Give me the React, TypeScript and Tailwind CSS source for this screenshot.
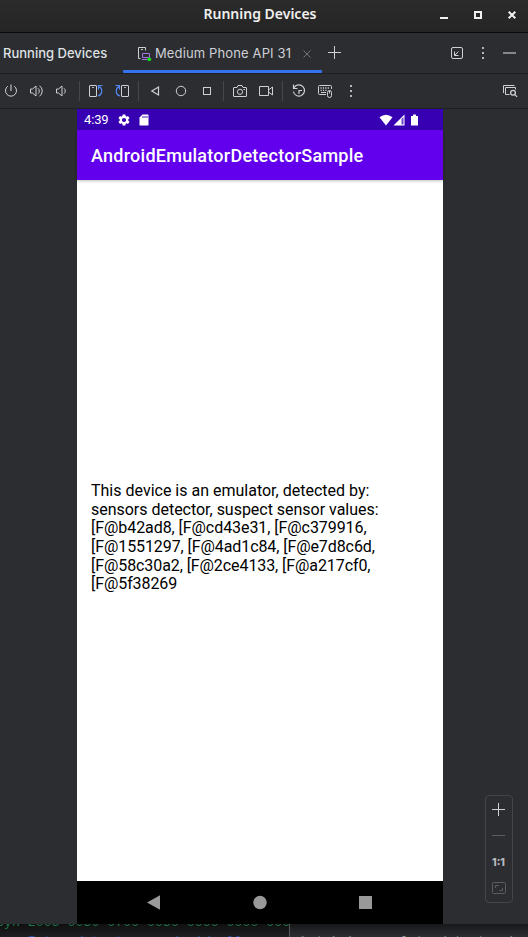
import type { ReactNode } from "react";

function Icon({ children, className = "", size = 16 }: { children: ReactNode; className?: string; size?: number }) {
  return (
    <svg
      width={size}
      height={size}
      viewBox={`0 0 ${size} ${size}`}
      fill="none"
      stroke="currentColor"
      className={`block shrink-0 ${className}`}
    >
      {children}
    </svg>
  );
}

function Separator() {
  return <div className="mx-2 h-5 w-px shrink-0 bg-[#45474b]" />;
}

function TitleBar() {
  return (
    <header className="flex h-[33px] items-center border-b border-[#0a0a0a] bg-linear-to-b from-[#2b2b2b] to-[#252525] text-[#f0f0ee]">
      <div className="w-[84px] shrink-0" />
      <h1 className="flex-1 whitespace-nowrap pb-[5px] text-center font-['Noto_Sans',sans-serif] text-[14px] font-semibold leading-[20px]">
        Running Devices
      </h1>
      <div className="mb-px flex w-[92px] shrink-0 gap-[18px]">
        <Icon><path d="M4 10h8" strokeWidth="2" /></Icon>
        <Icon><rect x="5" y="4" width="6" height="6" strokeWidth="2" /></Icon>
        <Icon><path d="M4.700 3.700l6.600 6.600M11.300 3.700l-6.600 6.600" strokeWidth="2" /></Icon>
      </div>
    </header>
  );
}

function TabBar() {
  return (
    <div className="flex h-[41px] border-b border-[#1e1f22] text-[#dfe1e5] font-['Inter',sans-serif] text-[13px]">
      <div className="w-[123px] shrink-0 whitespace-nowrap pl-[3px] pt-[10px] font-medium leading-5">
        Running Devices
      </div>
      <div className="flex w-[199px] shrink-0 flex-col">
        <div className="flex h-[38px] items-start pl-[13px]">
          <Icon className="mt-[13px]">
            <path d="M4.500 12.500h-2v-11h7v3" stroke="#ced0d6" />
            <path d="M5 3.500h2" stroke="#ced0d6" />
            <path d="M6.500 7.500h7v4h-7zM6 13.500h6" stroke="#a571e6" />
            <circle cx="13.300" cy="13.300" r="1.900" fill="#00e500" stroke="none" />
          </Icon>
          <span className="ml-[3px] w-[143px] whitespace-nowrap pt-[10px] leading-5 tracking-[0.01em] text-[#ced0d6]">
            Medium Phone API 31
          </span>
          <Icon className="ml-[1px] mt-[13px] text-[#6f737a]"><path d="M4.500 4.500l7 7M11.500 4.500l-7 7" /></Icon>
        </div>
        <div className="h-[3px] rounded-[1px] bg-[#3574f0]" />
      </div>
      <Icon className="ml-1 mt-[12px] text-[#ced0d6]"><path d="M8.500 1v13M2 7.500h13" /></Icon>
      <div className="ml-auto mr-[11px] mt-[12px] flex gap-[10px] text-[#ced0d6]">
        <Icon>
          <rect x="2.500" y="2.500" width="11" height="11" rx="1.500" />
          <path d="M5.500 6.500v4h4M5.500 10.500l4-4" />
        </Icon>
        <Icon><path d="M7 3h2M7 8h2M7 13h2" strokeWidth="2" stroke="#b4b6bb" /></Icon>
        <Icon><path d="M2 8h13" stroke="#85878c" strokeWidth="2" /></Icon>
      </div>
    </div>
  );
}

function Toolbar() {
  return (
    <div className="flex h-[35px] items-center border-b border-[#1e1f22] pl-[3px] pr-[10px] text-[#ced0d6]">
      <Icon>
        <path d="M4.800 3.200a5.500 5.500 0 1 0 6.400 0" />
        <path d="M8 1.500v6.500" stroke="#9a9ca1" strokeWidth="1.600" />
      </Icon>
      <Icon className="ml-[9px]">
        <path d="M2.500 6v4h2l3.500 3v-10L4.500 6zM10 5.300a3.500 3.500 0 0 1 0 5.400M11.500 2.700a6.500 6.500 0 0 1 0 10.600" />
      </Icon>
      <Icon className="ml-[9px]">
        <path d="M3.500 6v4h2l3.500 3v-10L5.500 6zM11 5.300a3.500 3.500 0 0 1 0 5.400" />
      </Icon>
      <div className="w-[2px]" />
      <Separator />
      <Icon>
        <rect x="1.500" y="2.500" width="7" height="11" rx=".5" />
        <path d="M4 4.500h2" strokeWidth=".8" />
        <path d="M10 12.900a5 5 0 0 0 1-9.300M10.500 6.500v-4h4" stroke="#548af7" strokeWidth="1.200" />
      </Icon>
      <Icon className="ml-[10px]">
        <rect x="7.500" y="2.500" width="7" height="11" rx=".5" />
        <path d="M10 4.500h2" strokeWidth=".8" />
        <path d="M6 12.900a5 5 0 0 1-1-9.300M1.500 2.500h4v4" stroke="#548af7" strokeWidth="1.200" />
      </Icon>
      <Separator />
      <Icon><path d="M11.500 4v8L4.800 8z" strokeWidth="1.200" /></Icon>
      <Icon className="ml-[10px]"><circle cx="8" cy="8" r="4.700" /></Icon>
      <Icon className="ml-[10px]"><rect x="4.500" y="4.500" width="7" height="7" /></Icon>
      <Separator />
      <Icon>
        <path d="M1.500 5q0-.5.5-.5h3l1-2h4l1 2h3q.5 0 .5.500v8q0 .5-.5.500H2q-.5 0-.5-.5z" />
        <circle cx="8" cy="8.800" r="2.600" />
        <path d="M11.500 6.500h1.500" />
      </Icon>
      <Icon className="ml-[10px]">
        <path d="M1.500 3.500h9v9h-9zM10.500 7l4-3v8l-4-3" />
      </Icon>
      <Separator />
      <Icon>
        <path d="M3 4.800A5.600 5.600 0 1 1 2.400 8.500M2.500 1.500v4h4M8 11V7.500h3" strokeWidth="1.200" />
      </Icon>
      <Icon className="ml-[10px]">
        <path d="M9 11.500H2.500q-1 0-1-1v-7q0-1 1-1h11q1 0 1 1v2.500M4 9.500h5" />
        <path d="M3.500 5h9M3.500 7.300h6" strokeDasharray="1.200 1.200" strokeWidth="1.300" />
        <rect x="10.500" y="7.500" width="4" height="7" rx="2" />
        <path d="M12.500 8v2.500" />
      </Icon>
      <Icon className="ml-[10px]"><path d="M7 3h2M7 8h2M7 13h2" strokeWidth="2" stroke="#b4b6bb" /></Icon>
      <Icon className="ml-auto">
        <path d="M1.500 10v-7.500h11" />
        <path d="M7.500 11.500h-4v-7h10V6.500" />
        <circle cx="11" cy="9.800" r="2.400" strokeWidth="1.300" />
        <path d="M12.800 11.600l2.300 2.300" strokeWidth="1.300" />
      </Icon>
    </div>
  );
}

function StatusBar() {
  return (
    <div className="flex h-[21px] items-center bg-[#3700b3] pl-[7px] pr-[22px] font-['Roboto',sans-serif] text-[13px] text-white">
      <span className="w-[25px] whitespace-nowrap pt-px leading-5 tracking-[-0.01em]">4:39</span>
      <svg width="14" height="14" viewBox="0 0 24 24" fill="currentColor" className="ml-[8px]">
        <path d="M19.140 12.940c.04-.3.060-.61.060-.94 0-.32-.02-.64-.07-.94l2.030-1.580c.18-.14.230-.41.120-.61l-1.920-3.320c-.12-.22-.37-.29-.59-.22l-2.390.960c-.5-.38-1.030-.7-1.620-.94l-.36-2.540c-.04-.24-.24-.41-.48-.41h-3.840c-.24 0-.43.170-.47.410l-.36 2.540c-.59.240-1.130.570-1.620.940l-2.390-.96c-.22-.08-.47 0-.59.220L2.740 8.870c-.12.210-.08.470.120.610l2.030 1.580c-.05.300-.09.630-.09.940s.02.640.070.940l-2.030 1.580c-.18.140-.23.410-.12.610l1.920 3.320c.12.220.370.290.590.220l2.390-.96c.5.380 1.030.700 1.620.940l.36 2.540c.05.240.240.410.480.410h3.840c.24 0 .44-.17.470-.41l.36-2.540c.59-.24 1.130-.56 1.620-.94l2.390.960c.22.080.470 0 .59-.22l1.920-3.320c.12-.22.070-.47-.12-.61zM12 15.600A3.600 3.600 0 1 1 12 8.400a3.600 3.600 0 0 1 0 7.200z" />
      </svg>
      <svg width="10" height="12" viewBox="0 0 10 12" className="ml-[8px]">
        <path d="M3.500.500H9q.5 0 .5.500v10q0 .5-.5.500H1q-.5 0-.5-.5V3.500z" fill="#fff" />
        <path d="M4 2v2M6 2v2M8 2v2" stroke="#3700b3" strokeWidth=".9" />
      </svg>
      <svg width="42" height="12" viewBox="0 0 42 12" className="ml-auto">
        <path d="M.5 3.300Q7 -1.700 13.500 3.300L7 11.500z" fill="#fff" />
        <path d="M14.500 11.500L25.500.500v11z" fill="#fff" />
        <path d="M22.500 5v5.500h2V3z" fill="#6c42c9" />
        <path d="M32 2h2V.500h3V2h2v9.500h-7z" fill="#fff" />
      </svg>
    </div>
  );
}

function Phone() {
  return (
    <div className="flex w-[366px] shrink-0 flex-col bg-white font-['Roboto',sans-serif]">
      <StatusBar />
      <div className="flex h-[50px] shrink-0 items-center bg-[#6200ee] pl-[14px] text-[18px] font-medium tracking-[0.260px] text-white shadow-[0_1px_3px_rgba(0,0,0,0.25)]">
        AndroidEmulatorDetectorSample
      </div>
      <main className="flex flex-1 items-center pl-[14px] pt-[15px]">
        <div className="whitespace-nowrap text-[16px] leading-[18.670px] text-black">
          <p>This device is an emulator, detected by:</p>
          <p className="tracking-[-0.02px]">sensors detector, suspect sensor values:</p>
          <p className="tracking-[-0.06px]">[F@b42ad8, [F@cd43e31, [F@c379916,</p>
          <p className="tracking-[-0.08px]">[F@1551297, [F@4ad1c84, [F@e7d8c6d,</p>
          <p className="tracking-[-0.08px]">[F@58c30a2, [F@2ce4133, [F@a217cf0,</p>
          <p className="tracking-[-0.08px]">[F@5f38269</p>
        </div>
      </main>
      <nav className="flex h-[43px] shrink-0 items-center bg-black pl-[70px]">
        <svg width="226" height="16" viewBox="0 0 226 16" fill="#999">
          <path d="M0 7.500L13 .3v14.400z" />
          <circle cx="113" cy="7.500" r="6.700" />
          <path d="M212 1h13v13h-13z" />
        </svg>
      </nav>
    </div>
  );
}

function ZoomControls() {
  return (
    <div className="mb-[21px] mr-[15px] mt-auto flex h-[108px] w-7 flex-col items-center rounded border border-[#43454a] text-[#ced0d6]">
      <Icon className="mr-[2px] mt-[6px]"><path d="M8.500 1v13M2 7.500h13" /></Icon>
      <Icon className="mr-[2px] mt-[10px] text-[#5a5d63]"><path d="M2 7.500h13" /></Icon>
      <span className="mr-px mt-[11px] font-['Inter',sans-serif] text-[10.500px] font-extrabold leading-4 text-[#b9bbc0]">1:1</span>
      <Icon className="mr-px mt-[9px] text-[#5a5d63]">
        <rect x="1.500" y="2.500" width="13" height="11" rx="1" />
        <path d="M4.500 8V5.500H8M8.500 10.500h3V8" />
      </Icon>
    </div>
  );
}

function EditorBehind() {
  return (
    <div className="flex h-[13px] shrink-0 overflow-hidden whitespace-pre bg-[#1e1f22] font-['Liberation_Mono',monospace] text-[13.250px]">
      <div className="h-[13px] w-[290px] shrink-0 overflow-hidden border-r border-[#55575b] bg-linear-to-b from-[#101010] to-[#1e1f22]">
        <div className="-ml-[4px] -mt-[11px] h-[19px] leading-[19px] text-[#1c7546]">syn 2005 0050 0700 0050 0000 0000 0000</div>
        <div className="pl-[28px] leading-[19px] text-[#1d4f9c]">Inter detector  android ellos</div>
      </div>
      <div className="h-[13px] flex-1 overflow-hidden bg-linear-to-b from-[#17181a] to-[#2b2d30] pl-[11px] pt-[8px] text-[12.800px] leading-[19px] text-[#8f9299]">
        batch ) <span className="text-[#548af7]">●</span> emulatordetector )
      </div>
    </div>
  );
}

export default function App() {
  return (
    <div className="flex h-[937px] w-[528px] flex-col overflow-hidden bg-[#2b2d30]">
      <TitleBar />
      <TabBar />
      <Toolbar />
      <div className="flex h-[815px] shrink-0 pl-[77px]">
        <Phone />
        <div className="flex flex-1 flex-col items-end">
          <ZoomControls />
        </div>
      </div>
      <EditorBehind />
    </div>
  );
}
